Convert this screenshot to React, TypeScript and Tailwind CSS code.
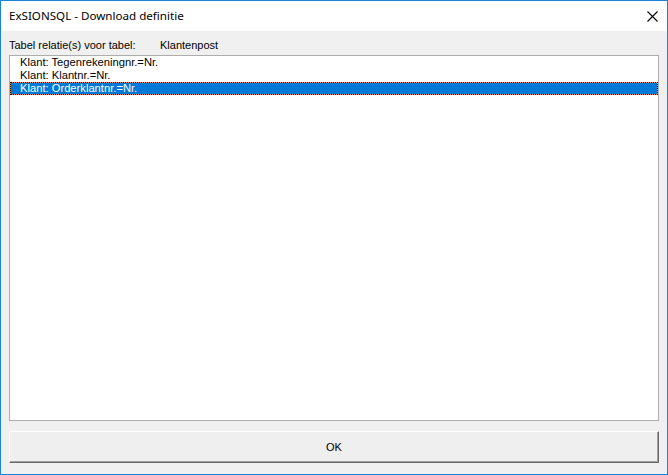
import React from "react";

const relations = [
  "Klant: Tegenrekeningnr.=Nr.",
  "Klant: Klantnr.=Nr.",
  "Klant: Orderklantnr.=Nr.",
];

export default function App() {
  const selected = 2;
  return (
    <div className="w-[668px] h-[475px] border border-[#1883d7] flex flex-col bg-[#f0f0f0] font-['Liberation_Sans',Arial,sans-serif] text-[11px] text-black">
      {/* title bar */}
      <div className="h-[30px] bg-white flex items-center justify-between pl-[8px] pr-[9px]">
        <span className="text-[11.6px] font-['Noto_Sans',sans-serif] leading-none">
          ExSIONSQL - Download definitie
        </span>
        <svg width="11" height="11" viewBox="0 0 11 11" className="block">
          <path d="M0.5 0.5 L10.5 10.5 M10.5 0.5 L0.5 10.5" stroke="#000" strokeWidth="1.1" />
        </svg>
      </div>

      {/* dialog body */}
      <div className="flex-1 flex flex-col px-[8px] pt-[8px] pb-[11px]">
        <div className="h-[13px] leading-[13px] flex">
          <span className="w-[151px]">Tabel relatie(s) voor tabel:</span>
          <span>Klantenpost</span>
        </div>

        <div className="mt-[3px] h-[366px] border border-[#adadad] bg-white flex flex-col text-[11.2px]">
          {relations.map((r, i) =>
            i === selected ? (
              <div
                key={r}
                className="h-[13px] leading-[11px] pl-[9px] bg-[#0078d7] text-white border border-[#f08c30] outline-1 outline-dotted outline-offset-[-1px] outline-black"
              >
                {r}
              </div>
            ) : (
              <div key={r} className="h-[13px] leading-[13px] pl-[10px]">
                {r}
              </div>
            )
          )}
        </div>

        <div className="mt-[10px] h-[32px] bg-[#efefef] border-t border-l border-t-white border-l-white border-r border-b border-r-[#696969] border-b-[#696969] shadow-[inset_-1px_-1px_0_#a0a0a0] flex items-center justify-center">
          OK
        </div>
      </div>
    </div>
  );
}
